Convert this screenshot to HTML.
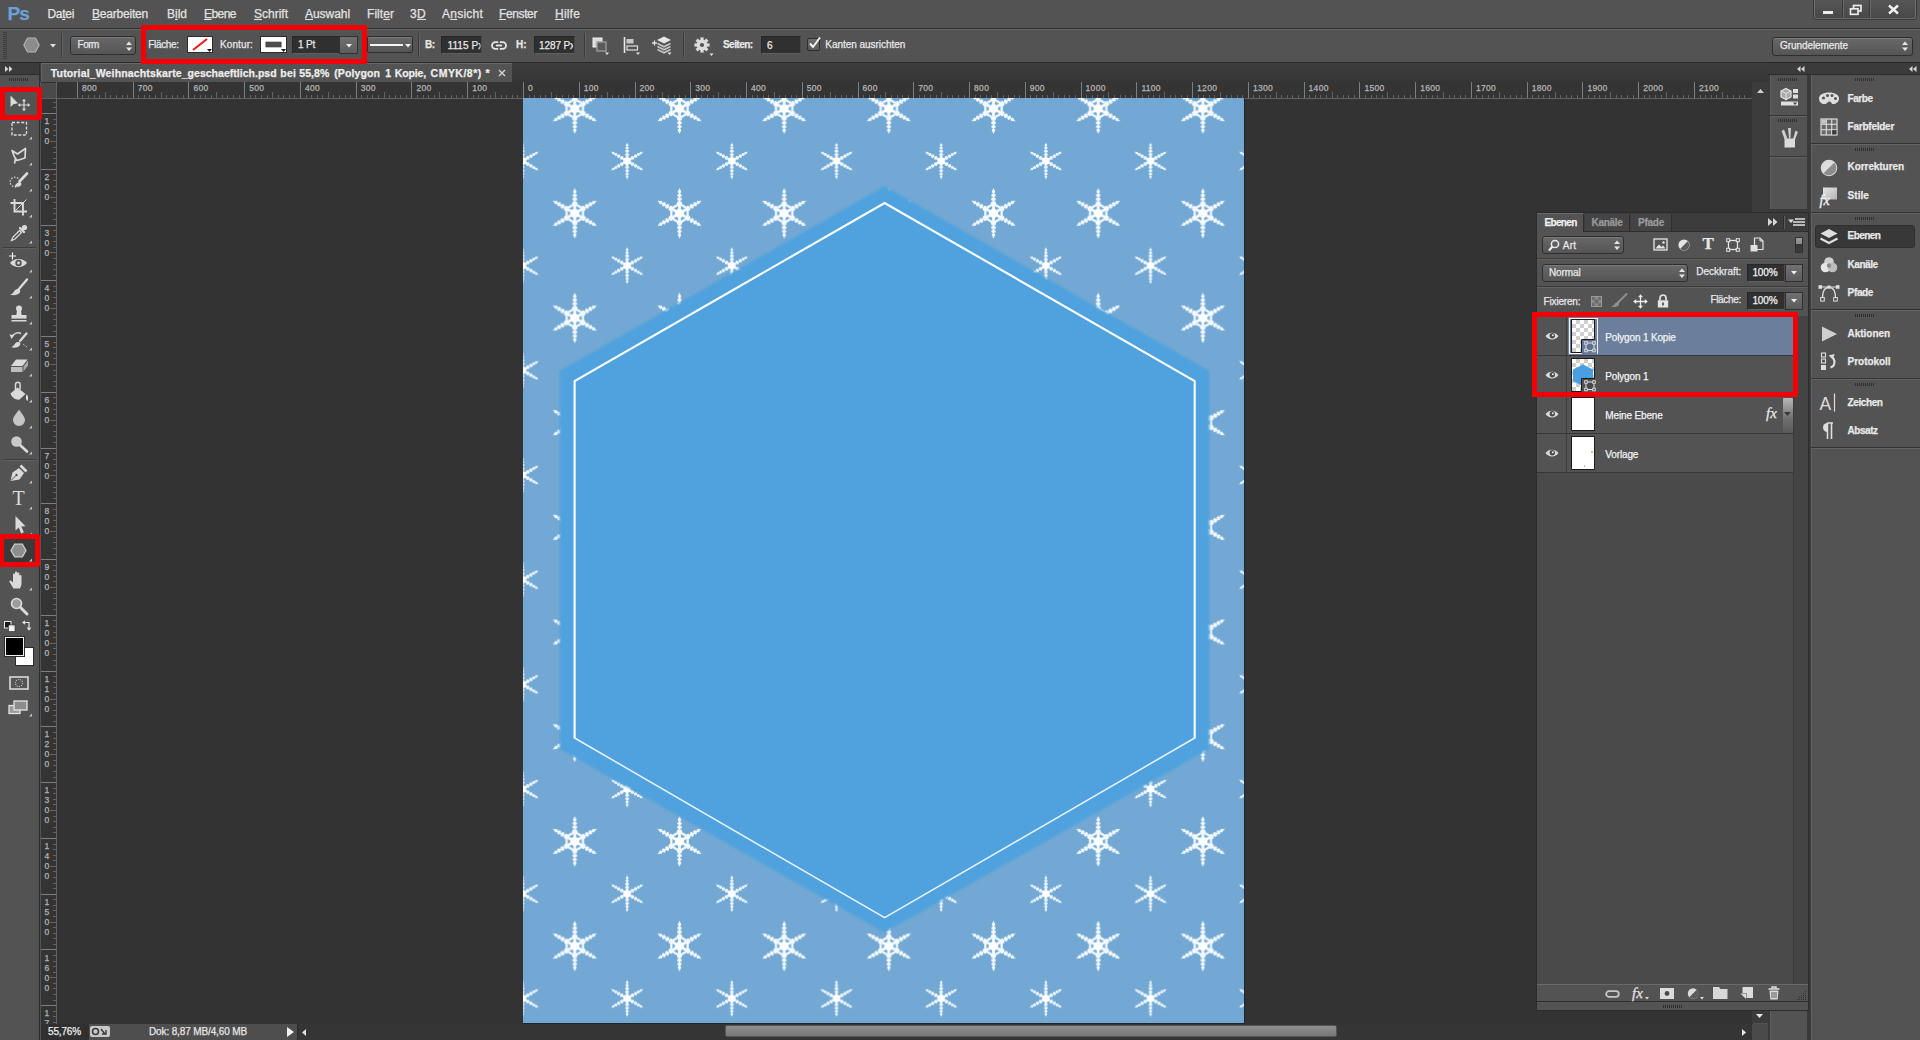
<!DOCTYPE html>
<html>
<head>
<meta charset="utf-8">
<title>Photoshop</title>
<style>
*{box-sizing:border-box;margin:0;padding:0}
html,body{width:1920px;height:1040px;overflow:hidden;background:#535353;font-family:"Liberation Sans",sans-serif;font-size:11px;color:#e6e6e6}
div,span,svg{position:absolute}
.t{white-space:nowrap;display:block;-webkit-text-stroke:0.25px}
svg{overflow:visible}
#menubar{left:0;top:0;width:1920px;height:29px;background:#535353;border-bottom:1px solid #303030}
#optbar{left:0;top:29px;width:1920px;height:34px;background:#535353;border-top:1px solid #676767;border-bottom:1px solid #2a2a2a}
#tabbar{left:40px;top:63px;width:1728px;height:19px;background:linear-gradient(#3d3d3d,#353535)}
#tab{left:1px;top:0;width:471px;height:19px;background:#535353;border-top:1px solid #6a6a6a;border-left:1px solid #646464}
#work{left:41px;top:82px;width:1712px;height:942px;background:#333333}
#hruler{left:41px;top:82px;width:1711px;height:17px;background:#343434;border-bottom:1px solid #646464}
#vruler{overflow:hidden;left:41px;top:99px;width:16px;height:925px;background:#343434;border-right:1px solid #646464}
#rcorner{left:41px;top:82px;width:16px;height:17px;background:#303030;border-right:1px solid #606060;border-bottom:1px solid #606060}
#rcorner:after{content:'';position:absolute;left:0;top:1px;width:15px;height:15px;background:#4a4a4a}
#canvas{left:523px;top:98px;width:721px;height:925px;overflow:hidden;background:#72a8d3}
#cshadow{left:523px;top:98px;width:722px;height:926px;background:#20262c}
#vscroll{left:1752px;top:82px;width:16px;height:941px;background:#3c3c3c}
#status{left:41px;top:1024px;width:1727px;height:16px;background:#353535}
#toolbar{left:0;top:63px;width:40px;height:977px;background:#535353}
.fld{background:#303030;border:1px solid #272727;border-bottom-color:#5f5f5f;border-right-color:#4a4a4a}
.dd{background:linear-gradient(#686868,#555555);border:1px solid #2e2e2e;border-radius:3px;box-shadow:inset 0 1px 0 #7a7a7a}
.btn{background:linear-gradient(#707070,#5c5c5c);border:1px solid #303030}
.vsep{width:1px;background:#3a3a3a;box-shadow:1px 0 0 #626262}
.red{border:5px solid #f20006}
.grip{height:3px;background:repeating-linear-gradient(90deg,#2f2f2f 0,#2f2f2f 1px,transparent 1px,transparent 2px)}

</style>
</head>
<body>
<div id="menubar"><span class="t" style="left:7.5px;top:1.9px;font-size:19px;line-height:23px;color:#6c9fd6;font-weight:bold;letter-spacing:-0.87px;">Ps</span><span class="t" style="left:47.5px;top:5.6px;font-size:12px;line-height:16px;color:#e2e2e2;letter-spacing:-0.30px;text-underline-offset:1px;">Da<u>t</u>ei</span><span class="t" style="left:92.0px;top:5.6px;font-size:12px;line-height:16px;color:#e2e2e2;letter-spacing:-0.20px;text-underline-offset:1px;"><u>B</u>earbeiten</span><span class="t" style="left:167.0px;top:5.6px;font-size:12px;line-height:16px;color:#e2e2e2;text-underline-offset:1px;">B<u>i</u>ld</span><span class="t" style="left:204.0px;top:5.6px;font-size:12px;line-height:16px;color:#e2e2e2;letter-spacing:-0.54px;text-underline-offset:1px;"><u>E</u>bene</span><span class="t" style="left:254.0px;top:5.6px;font-size:12px;line-height:16px;color:#e2e2e2;text-underline-offset:1px;"><u>S</u>chrift</span><span class="t" style="left:305.0px;top:5.6px;font-size:12px;line-height:16px;color:#e2e2e2;letter-spacing:-0.05px;text-underline-offset:1px;"><u>A</u>uswahl</span><span class="t" style="left:367.0px;top:5.6px;font-size:12px;line-height:16px;color:#e2e2e2;letter-spacing:0.06px;text-underline-offset:1px;">Filt<u>e</u>r</span><span class="t" style="left:410.0px;top:5.6px;font-size:12px;line-height:16px;color:#e2e2e2;letter-spacing:0.33px;text-underline-offset:1px;">3<u>D</u></span><span class="t" style="left:442.0px;top:5.6px;font-size:12px;line-height:16px;color:#e2e2e2;letter-spacing:0.24px;text-underline-offset:1px;">A<u>n</u>sicht</span><span class="t" style="left:499.0px;top:5.6px;font-size:12px;line-height:16px;color:#e2e2e2;letter-spacing:-0.38px;text-underline-offset:1px;"><u>F</u>enster</span><span class="t" style="left:555.0px;top:5.6px;font-size:12px;line-height:16px;color:#e2e2e2;letter-spacing:0.20px;text-underline-offset:1px;"><u>H</u>ilfe</span><div style="left:1814px;top:0;width:102px;height:19px;background:linear-gradient(#565656,#484848);border:1px solid #6c6c6c;border-top:none;border-radius:0 0 3px 3px;box-shadow:0 0 0 1px #3a3a3a"></div><div style="left:1842px;top:0;width:1px;height:18px;background:#3a3a3a;box-shadow:1px 0 0 #666"></div><div style="left:1869px;top:0;width:1px;height:18px;background:#3a3a3a;box-shadow:1px 0 0 #666"></div><div style="left:1823px;top:11px;width:10px;height:3px;background:#ececec"></div><svg style="left:1849px;top:4px" width="14" height="12" viewBox="0 0 14 12"><rect x="4.500" y="1.500" width="7.500" height="5.500" fill="none" stroke="#ececec" stroke-width="1.700"/><rect x="1.500" y="4.800" width="7.500" height="5.500" fill="#4e4e4e" stroke="#ececec" stroke-width="1.700"/></svg><svg style="left:1888px;top:5px" width="11" height="9" viewBox="0 0 11 9"><path d="M1 0.500L10 8.500M10 0.500L1 8.500" stroke="#f0f0f0" stroke-width="2.400"/></svg></div><div id="optbar"><div style="left:3px;top:2px;width:4px;height:27px;background:repeating-linear-gradient(#3b3b3b 0,#3b3b3b 1px,transparent 1px,transparent 2px)"></div><svg style="left:23px;top:7px" width="17" height="16" viewBox="0 0 17 16"><polygon points="4.6,1 12.4,1 16.2,8 12.4,15 4.6,15 0.8,8" fill="#8c8c8c" stroke="#b4b4b4" stroke-width="1.2"/></svg><svg style="left:50px;top:14px" width="6" height="4"><polygon points="0,0 6,0 3,3.5" fill="#e0e0e0"/></svg><div class="vsep" style="left:61px;top:3px;height:24px"></div><div class="dd" style="left:70px;top:6px;width:66px;height:19px"></div><span class="t" style="left:77.5px;top:7.5px;font-size:10px;line-height:14px;color:#e8e8e8;letter-spacing:-0.46px;">Form</span><svg style="left:126px;top:11px" width="6" height="10"><polygon points="0,4 6,4 3,0.5" fill="#e6e6e6"/><polygon points="0,6.5 6,6.5 3,10" fill="#e6e6e6"/></svg><span class="t" style="left:148.3px;top:7.5px;font-size:10px;line-height:14px;color:#e8e8e8;letter-spacing:-0.33px;">Fläche:</span><div style="left:187px;top:6px;width:26px;height:17px;background:#fff;border:1px solid #2c2c2c"></div><svg style="left:187px;top:6px" width="26" height="17"><path d="M6 14L20 3" stroke="#e81d1d" stroke-width="2.2"/><polygon points="20,13 25,13 22.5,16" fill="#1a1a1a"/></svg><span class="t" style="left:220.0px;top:7.5px;font-size:10px;line-height:14px;color:#e8e8e8;letter-spacing:0.11px;">Kontur:</span><div style="left:260px;top:6px;width:27px;height:17px;background:#fff;border:1px solid #2c2c2c"></div><svg style="left:260px;top:6px" width="27" height="17"><rect x="6" y="6.200" width="15" height="4.600" fill="#4e4e4e" stroke="#3c3c3c" stroke-width="1"/><polygon points="21,13 26,13 23.5,16" fill="#1a1a1a"/></svg><div class="fld" style="left:292px;top:6px;width:48px;height:18px"></div><span class="t" style="left:298.0px;top:7.5px;font-size:10px;line-height:14px;color:#e8e8e8;letter-spacing:-0.20px;">1 Pt</span><div class="btn" style="left:339px;top:6px;width:19px;height:18px"></div><svg style="left:346px;top:14px" width="6" height="4"><polygon points="0,0 6,0 3,3.5" fill="#f0f0f0"/></svg><div class="dd" style="left:367px;top:6px;width:46px;height:17px;border-radius:2px"></div><div style="left:370px;top:14px;width:33px;height:2px;background:#f4f4f4"></div><svg style="left:405px;top:14px" width="6" height="4"><polygon points="0,0 6,0 3,3.5" fill="#f0f0f0"/></svg><div class="vsep" style="left:418px;top:3px;height:24px"></div><span class="t" style="left:425.0px;top:7.5px;font-size:10px;line-height:14px;color:#e8e8e8;font-weight:bold;letter-spacing:-0.53px;">B:</span><div class="fld" style="left:441px;top:6px;width:41px;height:18px;overflow:hidden"></div><span class="t" style="left:447.5px;top:8.5px;font-size:10px;line-height:14px;color:#e8e8e8;letter-spacing:0.11px;clip-path:inset(0 3px 0 0);">1115 Px</span><svg style="left:491px;top:11px" width="16" height="9" viewBox="0 0 16 9"><rect x="1" y="1.100" width="14" height="6.800" rx="3.400" fill="none" stroke="#e6e6e6" stroke-width="1.800"/><path d="M5 4.500h6" stroke="#e6e6e6" stroke-width="1.800"/><path d="M8 0v2.400M8 6.600v2.400" stroke="#535353" stroke-width="1.600"/></svg><span class="t" style="left:516.0px;top:7.5px;font-size:10px;line-height:14px;color:#e8e8e8;font-weight:bold;letter-spacing:-0.03px;">H:</span><div class="fld" style="left:534px;top:6px;width:41px;height:18px"></div><span class="t" style="left:539.0px;top:8.5px;font-size:10px;line-height:14px;color:#e8e8e8;letter-spacing:-0.10px;clip-path:inset(0 2px 0 0);">1287 Px</span><div class="vsep" style="left:584px;top:3px;height:24px"></div><svg style="left:592px;top:7px" width="18" height="18" viewBox="0 0 18 18"><rect x="1" y="1" width="9" height="9" fill="#d8d8d8" stroke="#efefef" stroke-width="1"/><rect x="5" y="5" width="9" height="9" fill="#5a5a5a" stroke="#9a9a9a" stroke-width="1.4"/><polygon points="13,15.5 17,15.5 15,18" fill="#e0e0e0"/></svg><svg style="left:623px;top:7px" width="18" height="18" viewBox="0 0 18 18"><path d="M1.5 0v16" stroke="#e8e8e8" stroke-width="1.6"/><rect x="3.5" y="2" width="7" height="4.5" fill="#c8c8c8"/><rect x="4" y="9" width="10.5" height="4" fill="none" stroke="#dcdcdc" stroke-width="1.2"/><polygon points="13,15.5 17,15.5 15,18" fill="#e0e0e0"/></svg><svg style="left:651px;top:6px" width="22" height="19" viewBox="0 0 22 19"><path d="M1 7h5M3.5 4.5v5" stroke="#e0e0e0" stroke-width="1.3"/><polygon points="13,0.5 20,4 13,7.5 6,4" fill="#e6e6e6"/><path d="M6.5 7.5L13 10.7 19.5 7.5M6.5 10.5L13 13.7 19.5 10.500M6.500 13.500L13 16.700 19.500 13.500" fill="none" stroke="#c4c4c4" stroke-width="1.7"/><polygon points="16.500,16.500 20.500,16.500 18.500,19" fill="#e0e0e0"/></svg><div class="vsep" style="left:683px;top:3px;height:24px"></div><svg style="left:694px;top:7px" width="20" height="20" viewBox="-8 -8 20 20"><g fill="#dcdcdc"><rect x="-1.6" y="-7.6" width="3.2" height="4" transform="rotate(0)"/><rect x="-1.6" y="-7.6" width="3.2" height="4" transform="rotate(45)"/><rect x="-1.6" y="-7.6" width="3.2" height="4" transform="rotate(90)"/><rect x="-1.6" y="-7.6" width="3.2" height="4" transform="rotate(135)"/><rect x="-1.6" y="-7.6" width="3.2" height="4" transform="rotate(180)"/><rect x="-1.6" y="-7.6" width="3.2" height="4" transform="rotate(225)"/><rect x="-1.6" y="-7.6" width="3.2" height="4" transform="rotate(270)"/><rect x="-1.6" y="-7.6" width="3.2" height="4" transform="rotate(315)"/><circle r="5.4"/></g><circle r="2.1" fill="#535353"/><polygon points="7.5,8.500 11.500,8.500 9.500,11" fill="#e0e0e0"/></svg><span class="t" style="left:723.0px;top:7.5px;font-size:10px;line-height:14px;color:#e8e8e8;font-weight:bold;letter-spacing:-0.55px;">Seiten:</span><div class="fld" style="left:761px;top:6px;width:40px;height:18px"></div><span class="t" style="left:767.0px;top:8.5px;font-size:10px;line-height:14px;color:#e8e8e8;">6</span><div style="left:807px;top:8px;width:13px;height:13px;background:linear-gradient(#6e6e6e,#585858);border:1px solid #2e2e2e;border-radius:2px"></div><svg style="left:808px;top:6px" width="14" height="14" viewBox="0 0 14 14"><path d="M2 7.5L5 11 12 1.500" fill="none" stroke="#f0f0f0" stroke-width="2"/></svg><span class="t" style="left:825.3px;top:7.5px;font-size:10px;line-height:14px;color:#e8e8e8;letter-spacing:-0.04px;">Kanten ausrichten</span><div class="dd" style="left:1772px;top:7px;width:141px;height:19px"></div><span class="t" style="left:1780.0px;top:8.5px;font-size:10px;line-height:14px;color:#e8e8e8;letter-spacing:-0.07px;">Grundelemente</span><svg style="left:1902px;top:11px" width="6" height="10"><polygon points="0,4 6,4 3,0.500" fill="#e6e6e6"/><polygon points="0,6.500 6,6.500 3,10" fill="#e6e6e6"/></svg></div><div id="tabbar"><div id="tab"></div><span class="t" style="left:10.8px;top:2.8px;font-size:10.5px;line-height:14.5px;color:#ededed;font-weight:bold;letter-spacing:0.15px;">Tutorial_Weihnachtskarte_</span><span class="t" style="left:147.6px;top:2.8px;font-size:10.5px;line-height:14.5px;color:#ededed;font-weight:bold;letter-spacing:0.02px;">geschaeftlich.psd</span><span class="t" style="left:240.3px;top:2.8px;font-size:10.5px;line-height:14.5px;color:#ededed;font-weight:bold;letter-spacing:0.24px;">bei</span><span class="t" style="left:259.3px;top:2.8px;font-size:10.5px;line-height:14.5px;color:#ededed;font-weight:bold;letter-spacing:0.05px;">55,8%</span><span class="t" style="left:294.2px;top:2.8px;font-size:10.5px;line-height:14.5px;color:#ededed;font-weight:bold;letter-spacing:0.12px;">(Polygon</span><span class="t" style="left:345.2px;top:2.8px;font-size:10.5px;line-height:14.5px;color:#ededed;font-weight:bold;letter-spacing:-0.04px;">1</span><span class="t" style="left:354.7px;top:2.8px;font-size:10.5px;line-height:14.5px;color:#ededed;font-weight:bold;letter-spacing:-0.10px;">Kopie,</span><span class="t" style="left:390.6px;top:2.8px;font-size:10.5px;line-height:14.5px;color:#ededed;font-weight:bold;letter-spacing:0.48px;">CMYK/8*)</span><span class="t" style="left:445.5px;top:2.8px;font-size:10.5px;line-height:14.5px;color:#ededed;font-weight:bold;letter-spacing:0.21px;">*</span><svg style="left:458px;top:6px" width="8" height="8"><path d="M1 1L7 7M7 1L1 7" stroke="#d6d6d6" stroke-width="1.400"/></svg></div><div id="work"></div><div id="hruler"><svg width="1712" height="17" style="left:0;top:0"><path d="M41.5 12.500v3.500M47.5 12.500v3.500M53.5 12.500v3.500M58.5 12.500v3.500M64.5 10v6M69.5 12.500v3.500M75.5 12.500v3.500M81.5 12.500v3.500M86.5 12.500v3.500M97.5 12.500v3.500M103.5 12.500v3.500M108.5 12.500v3.500M114.5 12.500v3.500M120.5 10v6M125.5 12.500v3.500M131.5 12.500v3.500M136.5 12.500v3.500M142.5 12.500v3.500M153.5 12.500v3.500M159.5 12.500v3.500M164.5 12.500v3.500M170.5 12.500v3.500M175.5 10v6M181.5 12.500v3.500M186.5 12.500v3.500M192.5 12.500v3.500M198.5 12.500v3.500M209.5 12.500v3.500M214.5 12.500v3.500M220.5 12.500v3.500M226.5 12.500v3.500M231.5 10v6M237.5 12.500v3.500M242.5 12.500v3.500M248.5 12.500v3.500M253.5 12.500v3.500M265.5 12.500v3.500M270.5 12.500v3.500M276.5 12.500v3.500M281.5 12.500v3.500M287.5 10v6M292.5 12.500v3.500M298.5 12.500v3.500M304.5 12.500v3.500M309.5 12.500v3.500M320.5 12.500v3.500M326.5 12.500v3.500M331.5 12.500v3.500M337.5 12.500v3.500M343.5 10v6M348.5 12.500v3.500M354.5 12.500v3.500M359.5 12.500v3.500M365.5 12.500v3.500M376.5 12.500v3.500M382.5 12.500v3.500M387.5 12.500v3.500M393.5 12.500v3.500M398.5 10v6M404.5 12.500v3.500M410.5 12.500v3.500M415.5 12.500v3.500M421.5 12.500v3.500M432.5 12.500v3.500M437.5 12.500v3.500M443.5 12.500v3.500M449.5 12.500v3.500M454.5 10v6M460.5 12.500v3.500M465.5 12.500v3.500M471.5 12.500v3.500M476.5 12.500v3.500M488.5 12.500v3.500M493.5 12.500v3.500M499.5 12.500v3.500M504.5 12.500v3.500M510.5 10v6M515.5 12.500v3.500M521.5 12.500v3.500M527.5 12.500v3.500M532.5 12.500v3.500M543.5 12.500v3.500M549.5 12.500v3.500M554.5 12.500v3.500M560.5 12.500v3.500M566.5 10v6M571.5 12.500v3.500M577.5 12.500v3.500M582.5 12.500v3.500M588.5 12.500v3.500M599.5 12.500v3.500M605.5 12.500v3.500M610.5 12.500v3.500M616.5 12.500v3.500M621.5 10v6M627.5 12.500v3.500M633.5 12.500v3.500M638.5 12.500v3.500M644.5 12.500v3.500M655.5 12.500v3.500M660.5 12.500v3.500M666.5 12.500v3.500M672.5 12.500v3.500M677.5 10v6M683.5 12.500v3.500M688.5 12.500v3.500M694.5 12.500v3.500M699.5 12.500v3.500M711.5 12.500v3.500M716.5 12.500v3.500M722.5 12.500v3.500M727.5 12.500v3.500M733.5 10v6M738.5 12.500v3.500M744.5 12.500v3.500M750.5 12.500v3.500M755.5 12.500v3.500M766.5 12.500v3.500M772.5 12.500v3.500M778.5 12.500v3.500M783.5 12.500v3.500M789.5 10v6M794.5 12.500v3.500M800.5 12.500v3.500M805.5 12.500v3.500M811.5 12.500v3.500M822.5 12.500v3.500M828.5 12.500v3.500M833.5 12.500v3.500M839.5 12.500v3.500M844.5 10v6M850.5 12.500v3.500M856.5 12.500v3.500M861.5 12.500v3.500M867.5 12.500v3.500M878.5 12.500v3.500M883.5 12.500v3.500M889.5 12.500v3.500M895.5 12.500v3.500M900.5 10v6M906.5 12.500v3.500M911.5 12.500v3.500M917.5 12.500v3.500M923.5 12.500v3.500M934.5 12.500v3.500M939.5 12.500v3.500M945.5 12.500v3.500M950.5 12.500v3.500M956.5 10v6M962.5 12.500v3.500M967.5 12.500v3.500M973.5 12.500v3.500M978.5 12.500v3.500M989.5 12.500v3.500M995.5 12.500v3.500M1001.5 12.500v3.500M1006.5 12.500v3.500M1012.5 10v6M1017.5 12.500v3.500M1023.5 12.500v3.500M1028.5 12.500v3.500M1034.5 12.500v3.500M1045.5 12.500v3.500M1051.5 12.500v3.500M1056.5 12.500v3.500M1062.5 12.500v3.500M1067.5 10v6M1073.5 12.500v3.500M1079.5 12.500v3.500M1084.5 12.500v3.500M1090.5 12.500v3.500M1101.5 12.500v3.500M1107.5 12.500v3.500M1112.5 12.500v3.500M1118.5 12.500v3.500M1123.5 10v6M1129.5 12.500v3.500M1134.5 12.500v3.500M1140.5 12.500v3.500M1146.5 12.500v3.500M1157.5 12.500v3.500M1162.5 12.500v3.500M1168.5 12.500v3.500M1173.5 12.500v3.500M1179.5 10v6M1185.5 12.500v3.500M1190.5 12.500v3.500M1196.5 12.500v3.500M1201.5 12.500v3.500M1212.5 12.500v3.500M1218.5 12.500v3.500M1224.5 12.500v3.500M1229.5 12.500v3.500M1235.5 10v6M1240.5 12.500v3.500M1246.5 12.500v3.500M1251.5 12.500v3.500M1257.5 12.500v3.500M1268.5 12.500v3.500M1274.5 12.500v3.500M1279.5 12.500v3.500M1285.5 12.500v3.500M1291.5 10v6M1296.5 12.500v3.500M1302.5 12.500v3.500M1307.5 12.500v3.500M1313.5 12.500v3.500M1324.5 12.500v3.500M1330.5 12.500v3.500M1335.5 12.500v3.500M1341.5 12.500v3.500M1346.5 10v6M1352.5 12.500v3.500M1357.5 12.500v3.500M1363.5 12.500v3.500M1369.5 12.500v3.500M1380.5 12.500v3.500M1385.5 12.500v3.500M1391.5 12.500v3.500M1396.5 12.500v3.500M1402.5 10v6M1408.5 12.500v3.500M1413.5 12.500v3.500M1419.5 12.500v3.500M1424.5 12.500v3.500M1435.5 12.500v3.500M1441.5 12.500v3.500M1447.5 12.500v3.500M1452.5 12.500v3.500M1458.5 10v6M1463.5 12.500v3.500M1469.5 12.500v3.500M1475.5 12.500v3.500M1480.5 12.500v3.500M1491.5 12.500v3.500M1497.5 12.500v3.500M1502.5 12.500v3.500M1508.5 12.500v3.500M1514.5 10v6M1519.5 12.500v3.500M1525.5 12.500v3.500M1530.5 12.500v3.500M1536.5 12.500v3.500M1547.5 12.500v3.500M1553.5 12.500v3.500M1558.5 12.500v3.500M1564.5 12.500v3.500M1569.5 10v6M1575.5 12.500v3.500M1580.5 12.500v3.500M1586.5 12.500v3.500M1592.5 12.500v3.500M1603.5 12.500v3.500M1608.5 12.500v3.500M1614.5 12.500v3.500M1620.5 12.500v3.500M1625.5 10v6M1631.5 12.500v3.500M1636.5 12.500v3.500M1642.5 12.500v3.500M1647.5 12.500v3.500M1659.5 12.500v3.500M1664.5 12.500v3.500M1670.5 12.500v3.500M1675.5 12.500v3.500M1681.5 10v6M1686.5 12.500v3.500M1692.5 12.500v3.500M1698.5 12.500v3.500M1703.5 12.500v3.500" stroke="#626262" stroke-width="1" fill="none" shape-rendering="crispEdges"/><path d="M36.5 0v16M92.5 0v16M147.5 0v16M203.5 0v16M259.5 0v16M315.5 0v16M370.5 0v16M426.5 0v16M482.5 0v16M538.5 0v16M594.5 0v16M649.5 0v16M705.5 0v16M761.5 0v16M817.5 0v16M872.5 0v16M928.5 0v16M984.5 0v16M1040.5 0v16M1095.5 0v16M1151.5 0v16M1207.5 0v16M1263.5 0v16M1318.5 0v16M1374.5 0v16M1430.5 0v16M1486.5 0v16M1541.5 0v16M1597.5 0v16M1653.5 0v16" stroke="#7e7e7e" stroke-width="1" fill="none" shape-rendering="crispEdges"/></svg><span class="t" style="left:40.9px;top:0.3px;font-size:8.5px;line-height:12.5px;color:#b4b4b4;letter-spacing:0.3px;">800</span><span class="t" style="left:96.7px;top:0.3px;font-size:8.5px;line-height:12.5px;color:#b4b4b4;letter-spacing:0.3px;">700</span><span class="t" style="left:152.4px;top:0.3px;font-size:8.5px;line-height:12.5px;color:#b4b4b4;letter-spacing:0.3px;">600</span><span class="t" style="left:208.2px;top:0.3px;font-size:8.5px;line-height:12.5px;color:#b4b4b4;letter-spacing:0.3px;">500</span><span class="t" style="left:264.0px;top:0.3px;font-size:8.5px;line-height:12.5px;color:#b4b4b4;letter-spacing:0.3px;">400</span><span class="t" style="left:319.7px;top:0.3px;font-size:8.5px;line-height:12.5px;color:#b4b4b4;letter-spacing:0.3px;">300</span><span class="t" style="left:375.5px;top:0.3px;font-size:8.5px;line-height:12.5px;color:#b4b4b4;letter-spacing:0.3px;">200</span><span class="t" style="left:431.2px;top:0.3px;font-size:8.5px;line-height:12.5px;color:#b4b4b4;letter-spacing:0.3px;">100</span><span class="t" style="left:487.0px;top:0.3px;font-size:8.5px;line-height:12.5px;color:#b4b4b4;letter-spacing:0.3px;">0</span><span class="t" style="left:542.8px;top:0.3px;font-size:8.5px;line-height:12.5px;color:#b4b4b4;letter-spacing:0.3px;">100</span><span class="t" style="left:598.5px;top:0.3px;font-size:8.5px;line-height:12.5px;color:#b4b4b4;letter-spacing:0.3px;">200</span><span class="t" style="left:654.3px;top:0.3px;font-size:8.5px;line-height:12.5px;color:#b4b4b4;letter-spacing:0.3px;">300</span><span class="t" style="left:710.0px;top:0.3px;font-size:8.5px;line-height:12.5px;color:#b4b4b4;letter-spacing:0.3px;">400</span><span class="t" style="left:765.8px;top:0.3px;font-size:8.5px;line-height:12.5px;color:#b4b4b4;letter-spacing:0.3px;">500</span><span class="t" style="left:821.6px;top:0.3px;font-size:8.5px;line-height:12.5px;color:#b4b4b4;letter-spacing:0.3px;">600</span><span class="t" style="left:877.3px;top:0.3px;font-size:8.5px;line-height:12.5px;color:#b4b4b4;letter-spacing:0.3px;">700</span><span class="t" style="left:933.1px;top:0.3px;font-size:8.5px;line-height:12.5px;color:#b4b4b4;letter-spacing:0.3px;">800</span><span class="t" style="left:988.8px;top:0.3px;font-size:8.5px;line-height:12.5px;color:#b4b4b4;letter-spacing:0.3px;">900</span><span class="t" style="left:1044.6px;top:0.3px;font-size:8.5px;line-height:12.5px;color:#b4b4b4;letter-spacing:0.3px;">1000</span><span class="t" style="left:1100.4px;top:0.3px;font-size:8.5px;line-height:12.5px;color:#b4b4b4;letter-spacing:0.3px;">1100</span><span class="t" style="left:1156.1px;top:0.3px;font-size:8.5px;line-height:12.5px;color:#b4b4b4;letter-spacing:0.3px;">1200</span><span class="t" style="left:1211.9px;top:0.3px;font-size:8.5px;line-height:12.5px;color:#b4b4b4;letter-spacing:0.3px;">1300</span><span class="t" style="left:1267.6px;top:0.3px;font-size:8.5px;line-height:12.5px;color:#b4b4b4;letter-spacing:0.3px;">1400</span><span class="t" style="left:1323.4px;top:0.3px;font-size:8.5px;line-height:12.5px;color:#b4b4b4;letter-spacing:0.3px;">1500</span><span class="t" style="left:1379.2px;top:0.3px;font-size:8.5px;line-height:12.5px;color:#b4b4b4;letter-spacing:0.3px;">1600</span><span class="t" style="left:1434.9px;top:0.3px;font-size:8.5px;line-height:12.5px;color:#b4b4b4;letter-spacing:0.3px;">1700</span><span class="t" style="left:1490.7px;top:0.3px;font-size:8.5px;line-height:12.5px;color:#b4b4b4;letter-spacing:0.3px;">1800</span><span class="t" style="left:1546.4px;top:0.3px;font-size:8.5px;line-height:12.5px;color:#b4b4b4;letter-spacing:0.3px;">1900</span><span class="t" style="left:1602.2px;top:0.3px;font-size:8.5px;line-height:12.5px;color:#b4b4b4;letter-spacing:0.3px;">2000</span><span class="t" style="left:1658.0px;top:0.3px;font-size:8.5px;line-height:12.5px;color:#b4b4b4;letter-spacing:0.3px;">2100</span></div><div id="vruler"><svg width="16" height="924" style="left:0;top:0"><path d="M12 3.5h4M12 8.5h4M12 20.5h4M12 25.5h4M12 31.5h4M12 36.5h4M9 42.5h7M12 48.5h4M12 53.5h4M12 59.5h4M12 64.5h4M12 75.5h4M12 81.5h4M12 87.5h4M12 92.5h4M9 98.5h7M12 103.5h4M12 109.5h4M12 114.5h4M12 120.5h4M12 131.5h4M12 137.5h4M12 142.5h4M12 148.5h4M9 153.5h7M12 159.5h4M12 165.5h4M12 170.5h4M12 176.5h4M12 187.5h4M12 192.5h4M12 198.5h4M12 204.5h4M9 209.5h7M12 215.5h4M12 220.5h4M12 226.5h4M12 232.5h4M12 243.5h4M12 248.5h4M12 254.5h4M12 259.5h4M9 265.5h7M12 271.5h4M12 276.5h4M12 282.5h4M12 287.5h4M12 298.5h4M12 304.5h4M12 310.5h4M12 315.5h4M9 321.5h7M12 326.5h4M12 332.5h4M12 337.5h4M12 343.5h4M12 354.5h4M12 360.5h4M12 365.5h4M12 371.5h4M9 376.5h7M12 382.5h4M12 388.5h4M12 393.5h4M12 399.5h4M12 410.5h4M12 416.5h4M12 421.5h4M12 427.5h4M9 432.5h7M12 438.5h4M12 443.5h4M12 449.5h4M12 455.5h4M12 466.5h4M12 471.5h4M12 477.5h4M12 482.5h4M9 488.5h7M12 494.5h4M12 499.5h4M12 505.5h4M12 510.5h4M12 521.5h4M12 527.5h4M12 533.5h4M12 538.5h4M9 544.5h7M12 549.5h4M12 555.5h4M12 561.5h4M12 566.5h4M12 577.5h4M12 583.5h4M12 588.5h4M12 594.5h4M9 600.5h7M12 605.5h4M12 611.5h4M12 616.5h4M12 622.5h4M12 633.5h4M12 639.5h4M12 644.5h4M12 650.5h4M9 655.5h7M12 661.5h4M12 666.5h4M12 672.5h4M12 678.5h4M12 689.5h4M12 694.5h4M12 700.5h4M12 705.5h4M9 711.5h7M12 717.5h4M12 722.5h4M12 728.5h4M12 733.5h4M12 745.5h4M12 750.5h4M12 756.5h4M12 761.5h4M9 767.5h7M12 772.5h4M12 778.5h4M12 784.5h4M12 789.5h4M12 800.5h4M12 806.5h4M12 811.5h4M12 817.5h4M9 823.5h7M12 828.5h4M12 834.5h4M12 839.5h4M12 845.5h4M12 856.5h4M12 862.5h4M12 867.5h4M12 873.5h4M9 878.5h7M12 884.5h4M12 889.5h4M12 895.5h4M12 901.5h4M12 912.5h4M12 917.5h4M12 923.5h4" stroke="#626262" stroke-width="1" fill="none" shape-rendering="crispEdges"/><path d="M0 14.5h16M0 70.5h16M0 126.5h16M0 181.5h16M0 237.5h16M0 293.5h16M0 349.5h16M0 404.5h16M0 460.5h16M0 516.5h16M0 572.5h16M0 627.5h16M0 683.5h16M0 739.5h16M0 795.5h16M0 850.5h16M0 906.5h16" stroke="#7e7e7e" stroke-width="1" fill="none" shape-rendering="crispEdges"/></svg><span class="t" style="left:3.5px;top:16.1px;font-size:8.5px;line-height:12.5px;color:#b4b4b4;">1</span><span class="t" style="left:3.5px;top:26.1px;font-size:8.5px;line-height:12.5px;color:#b4b4b4;">0</span><span class="t" style="left:3.5px;top:36.1px;font-size:8.5px;line-height:12.5px;color:#b4b4b4;">0</span><span class="t" style="left:3.5px;top:71.8px;font-size:8.5px;line-height:12.5px;color:#b4b4b4;">2</span><span class="t" style="left:3.5px;top:81.8px;font-size:8.5px;line-height:12.5px;color:#b4b4b4;">0</span><span class="t" style="left:3.5px;top:91.8px;font-size:8.5px;line-height:12.5px;color:#b4b4b4;">0</span><span class="t" style="left:3.5px;top:127.6px;font-size:8.5px;line-height:12.5px;color:#b4b4b4;">3</span><span class="t" style="left:3.5px;top:137.6px;font-size:8.5px;line-height:12.5px;color:#b4b4b4;">0</span><span class="t" style="left:3.5px;top:147.6px;font-size:8.5px;line-height:12.5px;color:#b4b4b4;">0</span><span class="t" style="left:3.5px;top:183.3px;font-size:8.5px;line-height:12.5px;color:#b4b4b4;">4</span><span class="t" style="left:3.5px;top:193.3px;font-size:8.5px;line-height:12.5px;color:#b4b4b4;">0</span><span class="t" style="left:3.5px;top:203.3px;font-size:8.5px;line-height:12.5px;color:#b4b4b4;">0</span><span class="t" style="left:3.5px;top:239.1px;font-size:8.5px;line-height:12.5px;color:#b4b4b4;">5</span><span class="t" style="left:3.5px;top:249.1px;font-size:8.5px;line-height:12.5px;color:#b4b4b4;">0</span><span class="t" style="left:3.5px;top:259.1px;font-size:8.5px;line-height:12.5px;color:#b4b4b4;">0</span><span class="t" style="left:3.5px;top:294.9px;font-size:8.5px;line-height:12.5px;color:#b4b4b4;">6</span><span class="t" style="left:3.5px;top:304.9px;font-size:8.5px;line-height:12.5px;color:#b4b4b4;">0</span><span class="t" style="left:3.5px;top:314.9px;font-size:8.5px;line-height:12.5px;color:#b4b4b4;">0</span><span class="t" style="left:3.5px;top:350.6px;font-size:8.5px;line-height:12.5px;color:#b4b4b4;">7</span><span class="t" style="left:3.5px;top:360.6px;font-size:8.5px;line-height:12.5px;color:#b4b4b4;">0</span><span class="t" style="left:3.5px;top:370.6px;font-size:8.5px;line-height:12.5px;color:#b4b4b4;">0</span><span class="t" style="left:3.5px;top:406.4px;font-size:8.5px;line-height:12.5px;color:#b4b4b4;">8</span><span class="t" style="left:3.5px;top:416.4px;font-size:8.5px;line-height:12.5px;color:#b4b4b4;">0</span><span class="t" style="left:3.5px;top:426.4px;font-size:8.5px;line-height:12.5px;color:#b4b4b4;">0</span><span class="t" style="left:3.5px;top:462.1px;font-size:8.5px;line-height:12.5px;color:#b4b4b4;">9</span><span class="t" style="left:3.5px;top:472.1px;font-size:8.5px;line-height:12.5px;color:#b4b4b4;">0</span><span class="t" style="left:3.5px;top:482.1px;font-size:8.5px;line-height:12.5px;color:#b4b4b4;">0</span><span class="t" style="left:3.5px;top:517.9px;font-size:8.5px;line-height:12.5px;color:#b4b4b4;">1</span><span class="t" style="left:3.5px;top:527.9px;font-size:8.5px;line-height:12.5px;color:#b4b4b4;">0</span><span class="t" style="left:3.5px;top:537.9px;font-size:8.5px;line-height:12.5px;color:#b4b4b4;">0</span><span class="t" style="left:3.5px;top:547.9px;font-size:8.5px;line-height:12.5px;color:#b4b4b4;">0</span><span class="t" style="left:3.5px;top:573.7px;font-size:8.5px;line-height:12.5px;color:#b4b4b4;">1</span><span class="t" style="left:3.5px;top:583.7px;font-size:8.5px;line-height:12.5px;color:#b4b4b4;">1</span><span class="t" style="left:3.5px;top:593.7px;font-size:8.5px;line-height:12.5px;color:#b4b4b4;">0</span><span class="t" style="left:3.5px;top:603.7px;font-size:8.5px;line-height:12.5px;color:#b4b4b4;">0</span><span class="t" style="left:3.5px;top:629.4px;font-size:8.5px;line-height:12.5px;color:#b4b4b4;">1</span><span class="t" style="left:3.5px;top:639.4px;font-size:8.5px;line-height:12.5px;color:#b4b4b4;">2</span><span class="t" style="left:3.5px;top:649.4px;font-size:8.5px;line-height:12.5px;color:#b4b4b4;">0</span><span class="t" style="left:3.5px;top:659.4px;font-size:8.5px;line-height:12.5px;color:#b4b4b4;">0</span><span class="t" style="left:3.5px;top:685.2px;font-size:8.5px;line-height:12.5px;color:#b4b4b4;">1</span><span class="t" style="left:3.5px;top:695.2px;font-size:8.5px;line-height:12.5px;color:#b4b4b4;">3</span><span class="t" style="left:3.5px;top:705.2px;font-size:8.5px;line-height:12.5px;color:#b4b4b4;">0</span><span class="t" style="left:3.5px;top:715.2px;font-size:8.5px;line-height:12.5px;color:#b4b4b4;">0</span><span class="t" style="left:3.5px;top:740.9px;font-size:8.5px;line-height:12.5px;color:#b4b4b4;">1</span><span class="t" style="left:3.5px;top:750.9px;font-size:8.5px;line-height:12.5px;color:#b4b4b4;">4</span><span class="t" style="left:3.5px;top:760.9px;font-size:8.5px;line-height:12.5px;color:#b4b4b4;">0</span><span class="t" style="left:3.5px;top:770.9px;font-size:8.5px;line-height:12.5px;color:#b4b4b4;">0</span><span class="t" style="left:3.5px;top:796.7px;font-size:8.5px;line-height:12.5px;color:#b4b4b4;">1</span><span class="t" style="left:3.5px;top:806.7px;font-size:8.5px;line-height:12.5px;color:#b4b4b4;">5</span><span class="t" style="left:3.5px;top:816.7px;font-size:8.5px;line-height:12.5px;color:#b4b4b4;">0</span><span class="t" style="left:3.5px;top:826.7px;font-size:8.5px;line-height:12.5px;color:#b4b4b4;">0</span><span class="t" style="left:3.5px;top:852.5px;font-size:8.5px;line-height:12.5px;color:#b4b4b4;">1</span><span class="t" style="left:3.5px;top:862.5px;font-size:8.5px;line-height:12.5px;color:#b4b4b4;">6</span><span class="t" style="left:3.5px;top:872.5px;font-size:8.5px;line-height:12.5px;color:#b4b4b4;">0</span><span class="t" style="left:3.5px;top:882.5px;font-size:8.5px;line-height:12.5px;color:#b4b4b4;">0</span><span class="t" style="left:3.5px;top:908.2px;font-size:8.5px;line-height:12.5px;color:#b4b4b4;">1</span><span class="t" style="left:3.5px;top:918.2px;font-size:8.5px;line-height:12.5px;color:#b4b4b4;">7</span><span class="t" style="left:3.5px;top:928.2px;font-size:8.5px;line-height:12.5px;color:#b4b4b4;">0</span><span class="t" style="left:3.5px;top:938.2px;font-size:8.5px;line-height:12.5px;color:#b4b4b4;">0</span></div><div id="rcorner"></div><div id="vscroll"></div><svg style="left:1757px;top:89px" width="7" height="4"><polygon points="0,4 7,4 3.500,0" fill="#d0d0d0"/></svg><svg style="left:1756px;top:1014px" width="7" height="4"><polygon points="0,0 7,0 3.500,4" fill="#e8e8e8"/></svg><div id="status"><div style="left:0;top:0;width:256px;height:16px;background:#4e4e4e"></div><div style="left:0;top:0;width:48px;height:16px;background:#303030"></div><span class="t" style="left:7.0px;top:0.5px;font-size:10px;line-height:14px;color:#ececec;letter-spacing:-0.15px;">55,76%</span><div style="left:49px;top:2px;width:20px;height:11px;background:#c9c9c9;border-radius:2px"></div><svg style="left:49px;top:2px" width="20" height="11" viewBox="0 0 20 11"><circle cx="5.500" cy="5.500" r="3" fill="none" stroke="#3a3a3a" stroke-width="1.600"/><path d="M11 3l4 5M12 8h4V4" fill="none" stroke="#3a3a3a" stroke-width="1.400"/></svg><span class="t" style="left:108.0px;top:0.8px;font-size:10px;line-height:14px;color:#e6e6e6;letter-spacing:-0.13px;">Dok: 8,87 MB/4,60 MB</span><svg style="left:246px;top:3px" width="8" height="10"><polygon points="0,0 0,10 7,5" fill="#f0f0f0"/></svg><div style="left:256px;top:0;width:1px;height:16px;background:#2a2a2a"></div><svg style="left:261px;top:5px" width="4" height="7"><polygon points="4,0 4,7 0,3.500" fill="#e0e0e0"/></svg><div style="left:684px;top:1px;width:612px;height:12px;background:linear-gradient(#8e8e8e,#787878);border-radius:2px;border:1px solid #555"></div><svg style="left:1701px;top:5px" width="4" height="7"><polygon points="0,0 0,7 4,3.500" fill="#e8e8e8"/></svg><div style="left:1711px;top:0;width:16px;height:16px;background:#4a4a4a"></div></div><div id="cshadow"></div><div id="canvas"><svg width="721" height="925" viewBox="0 0 721 925" style="position:absolute;left:0;top:0">
<defs>
<filter id="hb" x="-3%" y="-3%" width="106%" height="106%"><feGaussianBlur stdDeviation="1.1"/></filter>
<filter id="bl" x="-5%" y="-5%" width="110%" height="110%"><feGaussianBlur stdDeviation="0.55"/></filter>
<g id="big" fill="#f3f9fe"><g transform="rotate(30)"><rect x="0" y="-0.65" width="23.00" height="1.30"/><rect x="0" y="-1.40" width="10.00" height="2.80"/><ellipse cx="10.20" cy="0" rx="2.00" ry="2.60"/><ellipse cx="14.20" cy="0" rx="1.70" ry="2.50"/><ellipse cx="18.00" cy="0" rx="1.60" ry="2.20"/><ellipse cx="21.50" cy="0" rx="1.40" ry="1.80"/><polygon points="22.5,-1.2 25.5,0 22.5,1.2"/></g><g transform="rotate(90)"><rect x="0" y="-0.65" width="23.00" height="1.30"/><rect x="0" y="-1.40" width="10.00" height="2.80"/><ellipse cx="10.20" cy="0" rx="2.00" ry="2.60"/><ellipse cx="14.20" cy="0" rx="1.70" ry="2.50"/><ellipse cx="18.00" cy="0" rx="1.60" ry="2.20"/><ellipse cx="21.50" cy="0" rx="1.40" ry="1.80"/><polygon points="22.5,-1.2 25.5,0 22.5,1.2"/></g><g transform="rotate(150)"><rect x="0" y="-0.65" width="23.00" height="1.30"/><rect x="0" y="-1.40" width="10.00" height="2.80"/><ellipse cx="10.20" cy="0" rx="2.00" ry="2.60"/><ellipse cx="14.20" cy="0" rx="1.70" ry="2.50"/><ellipse cx="18.00" cy="0" rx="1.60" ry="2.20"/><ellipse cx="21.50" cy="0" rx="1.40" ry="1.80"/><polygon points="22.5,-1.2 25.5,0 22.5,1.2"/></g><g transform="rotate(210)"><rect x="0" y="-0.65" width="23.00" height="1.30"/><rect x="0" y="-1.40" width="10.00" height="2.80"/><ellipse cx="10.20" cy="0" rx="2.00" ry="2.60"/><ellipse cx="14.20" cy="0" rx="1.70" ry="2.50"/><ellipse cx="18.00" cy="0" rx="1.60" ry="2.20"/><ellipse cx="21.50" cy="0" rx="1.40" ry="1.80"/><polygon points="22.5,-1.2 25.5,0 22.5,1.2"/></g><g transform="rotate(270)"><rect x="0" y="-0.65" width="23.00" height="1.30"/><rect x="0" y="-1.40" width="10.00" height="2.80"/><ellipse cx="10.20" cy="0" rx="2.00" ry="2.60"/><ellipse cx="14.20" cy="0" rx="1.70" ry="2.50"/><ellipse cx="18.00" cy="0" rx="1.60" ry="2.20"/><ellipse cx="21.50" cy="0" rx="1.40" ry="1.80"/><polygon points="22.5,-1.2 25.5,0 22.5,1.2"/></g><g transform="rotate(330)"><rect x="0" y="-0.65" width="23.00" height="1.30"/><rect x="0" y="-1.40" width="10.00" height="2.80"/><ellipse cx="10.20" cy="0" rx="2.00" ry="2.60"/><ellipse cx="14.20" cy="0" rx="1.70" ry="2.50"/><ellipse cx="18.00" cy="0" rx="1.60" ry="2.20"/><ellipse cx="21.50" cy="0" rx="1.40" ry="1.80"/><polygon points="22.5,-1.2 25.5,0 22.5,1.2"/></g><polygon points="8.14,4.70 0.00,9.40 -8.14,4.70 -8.14,-4.70 -0.00,-9.40 8.14,-4.70" fill="none" stroke="#f3f9fe" stroke-width="2.3" stroke-linejoin="round"/><circle r="4.6" fill="#fdfeff"/></g>
<g id="sm" fill="#eff7fd"><g transform="rotate(30)"><rect x="0" y="-0.55" width="16.50" height="1.10"/><rect x="0" y="-1.20" width="5.00" height="2.40"/><ellipse cx="6.30" cy="0" rx="1.40" ry="2.00"/><ellipse cx="9.80" cy="0" rx="1.30" ry="1.90"/><ellipse cx="13.00" cy="0" rx="1.20" ry="1.60"/><ellipse cx="15.80" cy="0" rx="1.10" ry="1.30"/><polygon points="16,-0.9 18.8,0 16,0.9"/></g><g transform="rotate(90)"><rect x="0" y="-0.55" width="16.50" height="1.10"/><rect x="0" y="-1.20" width="5.00" height="2.40"/><ellipse cx="6.30" cy="0" rx="1.40" ry="2.00"/><ellipse cx="9.80" cy="0" rx="1.30" ry="1.90"/><ellipse cx="13.00" cy="0" rx="1.20" ry="1.60"/><ellipse cx="15.80" cy="0" rx="1.10" ry="1.30"/><polygon points="16,-0.9 18.8,0 16,0.9"/></g><g transform="rotate(150)"><rect x="0" y="-0.55" width="16.50" height="1.10"/><rect x="0" y="-1.20" width="5.00" height="2.40"/><ellipse cx="6.30" cy="0" rx="1.40" ry="2.00"/><ellipse cx="9.80" cy="0" rx="1.30" ry="1.90"/><ellipse cx="13.00" cy="0" rx="1.20" ry="1.60"/><ellipse cx="15.80" cy="0" rx="1.10" ry="1.30"/><polygon points="16,-0.9 18.8,0 16,0.9"/></g><g transform="rotate(210)"><rect x="0" y="-0.55" width="16.50" height="1.10"/><rect x="0" y="-1.20" width="5.00" height="2.40"/><ellipse cx="6.30" cy="0" rx="1.40" ry="2.00"/><ellipse cx="9.80" cy="0" rx="1.30" ry="1.90"/><ellipse cx="13.00" cy="0" rx="1.20" ry="1.60"/><ellipse cx="15.80" cy="0" rx="1.10" ry="1.30"/><polygon points="16,-0.9 18.8,0 16,0.9"/></g><g transform="rotate(270)"><rect x="0" y="-0.55" width="16.50" height="1.10"/><rect x="0" y="-1.20" width="5.00" height="2.40"/><ellipse cx="6.30" cy="0" rx="1.40" ry="2.00"/><ellipse cx="9.80" cy="0" rx="1.30" ry="1.90"/><ellipse cx="13.00" cy="0" rx="1.20" ry="1.60"/><ellipse cx="15.80" cy="0" rx="1.10" ry="1.30"/><polygon points="16,-0.9 18.8,0 16,0.9"/></g><g transform="rotate(330)"><rect x="0" y="-0.55" width="16.50" height="1.10"/><rect x="0" y="-1.20" width="5.00" height="2.40"/><ellipse cx="6.30" cy="0" rx="1.40" ry="2.00"/><ellipse cx="9.80" cy="0" rx="1.30" ry="1.90"/><ellipse cx="13.00" cy="0" rx="1.20" ry="1.60"/><ellipse cx="15.80" cy="0" rx="1.10" ry="1.30"/><polygon points="16,-0.9 18.8,0 16,0.9"/></g><circle r="3.8" fill="#fdfeff"/></g>
<pattern id="sn" x="-0.54" y="-41.700" width="104.68" height="104.68" patternUnits="userSpaceOnUse">
<use href="#big" x="52.34" y="52.34"/>
<use href="#sm" x="0" y="0"/><use href="#sm" x="104.68" y="0"/><use href="#sm" x="0" y="104.68"/><use href="#sm" x="104.68" y="104.68"/>
</pattern>
</defs>
<rect width="721" height="925" fill="#72a8d3"/>
<rect width="721" height="925" fill="url(#sn)" filter="url(#bl)"/>
<polygon points="361.6,88.2 686.4,273 686.4,650.8 361.6,834.5 36.6,650.8 36.6,273" fill="#4fa2dd" filter="url(#hb)"/>
<polygon points="361.6,100 676,280 676,643 361.6,824 47,643 47,280" fill="#4fa2dd"/>
<polyline points="51.6,640.5 51.6,283 361.6,105 671.7,283 671.7,640.5" fill="none" stroke="#ffffff" stroke-width="2.1" stroke-linejoin="miter"/><polyline points="671.7,640 361.6,819.7 51.6,640" fill="none" stroke="#eaf2fa" stroke-width="1.5" stroke-linejoin="miter"/>
</svg></div>
<div id="toolbar"><div style="left:0;top:0;width:40px;height:12px;background:#3b3b3b;border-bottom:1px solid #2c2c2c"></div><svg style="left:5px;top:3px" width="8" height="6"><polygon points="0,0 0,6 3.5,3" fill="#d8d8d8"/><polygon points="4,0 4,6 7.5,3" fill="#d8d8d8"/></svg><div style="left:39px;top:0;width:1px;height:977px;background:#2e2e2e"></div><div class="grip" style="left:9px;top:15px;width:20px"></div><div style="left:3px;top:475px;width:33px;height:25px;background:#3a3a3a;border-radius:2px"></div><svg style="left:7.0px;top:29.0px" width="24" height="22" viewBox="-12.0 -11.0 24 22"><polygon points="-8.5,-7.5 -8.5,4 -5.6,1.2 -1,0.2" fill="#dadada"/><path d="M5 -3v10M0 2h10" stroke="#dadada" stroke-width="1.2"/><path d="M5 -4.2l-2 2.4h4zM5 8.2l-2 -2.4h4zM-1.200 2l2.400 -2v4zM11.200 2l-2.400 -2v4z" fill="#dadada"/></svg><svg style="left:7.0px;top:55.0px" width="24" height="22" viewBox="-12.0 -11.0 24 22"><rect x="-7" y="-6.500" width="14.500" height="12.500" fill="none" stroke="#dadada" stroke-width="1.300" stroke-dasharray="3 1.600"/><polygon points="13,7.5 13,10.5 10,10.5" fill="#c4c4c4"/></svg><svg style="left:7.0px;top:81.0px" width="24" height="22" viewBox="-12.0 -11.0 24 22"><path d="M-7 -4.500L-1.500 -1 6.500 -6.500 6 3 -2 5.500 -4.500 2zM-3.500 3.500l-1 5" fill="none" stroke="#dadada" stroke-width="1.700" stroke-linejoin="round"/><polygon points="13,7.5 13,10.5 10,10.5" fill="#c4c4c4"/></svg><svg style="left:7.0px;top:107.0px" width="24" height="22" viewBox="-12.0 -11.0 24 22"><circle cx="-4" cy="1" r="4.800" fill="none" stroke="#dadada" stroke-width="1.200" stroke-dasharray="1.500 1.500"/><path d="M8 -7.500L0.500 0.500" stroke="#dadada" stroke-width="2.600" stroke-linecap="round"/><path d="M-4.500 5.500c2 -4 5 -5 6.500 -3.500s-1 5 -6.500 3.500z" fill="#dadada"/><polygon points="13,7.5 13,10.5 10,10.5" fill="#c4c4c4"/></svg><svg style="left:7.0px;top:133.0px" width="24" height="22" viewBox="-12.0 -11.0 24 22"><path d="M-4.500 -8v12.500h12.500M-8.500 -4h12.500v12.500" fill="none" stroke="#dadada" stroke-width="1.900"/><path d="M-3.500 3.500L7.500 -7.500" stroke="#dadada" stroke-width="1"/><polygon points="13,7.5 13,10.5 10,10.5" fill="#c4c4c4"/></svg><svg style="left:7.0px;top:159.0px" width="24" height="22" viewBox="-12.0 -11.0 24 22"><path d="M-7.500 7.500l1.500 -3.500 6.500 -6.500 2 2 -6.500 6.500z" fill="none" stroke="#dadada" stroke-width="1.300"/><path d="M1 -5l4 4" stroke="#dadada" stroke-width="2.400" stroke-linecap="round"/><circle cx="5.500" cy="-5.500" r="2.600" fill="#dadada"/><polygon points="13,7.5 13,10.5 10,10.5" fill="#c4c4c4"/></svg><div style="left:3px;top:184px;width:33px;height:1px;background:#3c3c3c;box-shadow:0 1px 0 #606060"></div><svg style="left:7.0px;top:188.0px" width="24" height="22" viewBox="-12.0 -11.0 24 22"><path d="M-9 1c4 -5.500 13 -5.500 17 0c-4 5.500 -13 5.500 -17 0z" fill="#dadada"/><circle cx="-0.500" cy="1" r="3.200" fill="#555"/><circle cx="-0.500" cy="1" r="1.400" fill="#dadada"/><path d="M-6.500 -9.500v7M-10 -6h7" stroke="#f2f2f2" stroke-width="1.200"/><polygon points="13,7.5 13,10.5 10,10.5" fill="#c4c4c4"/></svg><svg style="left:7.0px;top:214.0px" width="24" height="22" viewBox="-12.0 -11.0 24 22"><path d="M8 -8.500L-0.500 1.500" stroke="#dadada" stroke-width="2.400" stroke-linecap="round"/><path d="M-9 6.500c3.500 0 4 -5 7 -5.500s4 2 2.500 4-6 3 -9.500 1.500z" fill="#dadada"/><polygon points="13,7.5 13,10.5 10,10.5" fill="#c4c4c4"/></svg><svg style="left:7.0px;top:240.0px" width="24" height="22" viewBox="-12.0 -11.0 24 22"><circle cx="0" cy="-5.500" r="3" fill="#dadada"/><path d="M-1.800 -4h3.600l1 5.500h-5.600z" fill="#dadada"/><rect x="-7.500" y="1" width="15" height="3.600" fill="#dadada"/><rect x="-7.500" y="6" width="15" height="1.500" fill="#dadada"/><polygon points="13,7.5 13,10.5 10,10.5" fill="#c4c4c4"/></svg><svg style="left:7.0px;top:266.0px" width="24" height="22" viewBox="-12.0 -11.0 24 22"><path d="M7.500 -6.500L1 1" stroke="#dadada" stroke-width="2.300" stroke-linecap="round"/><path d="M-8 7c3 0 3.500 -4.500 6.500 -5s3.500 2 2 3.800-5.500 2.700 -8.500 1.200z" fill="#dadada"/><path d="M-7 -3.500c2 -3.500 6 -4.500 9 -3" fill="none" stroke="#dadada" stroke-width="1.500"/><polygon points="-9.500,-5.500 -4.500,-5 -7.500,-1" fill="#dadada"/><path d="M4 4l4 3" stroke="#dadada" stroke-width="1" stroke-dasharray="1 1"/><polygon points="13,7.5 13,10.5 10,10.5" fill="#c4c4c4"/></svg><svg style="left:7.0px;top:292.0px" width="24" height="22" viewBox="-12.0 -11.0 24 22"><polygon points="-3,-6.500 8.500,-6.500 3.500,0 -8,0" fill="#dadada"/><polygon points="-8,1 3.500,1 3.500,6 -8,6" fill="#bdbdbd"/><polygon points="4.500,0.500 9,-5.500 9,-0.500 4.500,5.500" fill="#a8a8a8"/><polygon points="13,7.5 13,10.5 10,10.5" fill="#c4c4c4"/></svg><svg style="left:7.0px;top:318.0px" width="24" height="22" viewBox="-12.0 -11.0 24 22"><path d="M-8.500 1.500l7 -6 8 6.500 -6 5.500c-3 1 -8 -2 -9 -6z" fill="#dadada"/><path d="M-3.500 -2v-5.500a2.300 2.300 0 0 1 4.600 0v5" fill="none" stroke="#dadada" stroke-width="1.500"/><path d="M7.500 2.500c1.500 1 2 4 1 6.500c-1.500 -1 -2 -4 -1 -6.500z" fill="#f0f0f0"/><polygon points="13,7.5 13,10.5 10,10.5" fill="#c4c4c4"/></svg><svg style="left:7.0px;top:344.0px" width="24" height="22" viewBox="-12.0 -11.0 24 22"><path d="M0 -8.500c2.500 4 6 7 6 10.500a6 6 0 0 1 -12 0c0 -3.500 3.500 -6.500 6 -10.500z" fill="#c6c6c6"/><polygon points="13,7.5 13,10.5 10,10.5" fill="#c4c4c4"/></svg><svg style="left:7.0px;top:370.0px" width="24" height="22" viewBox="-12.0 -11.0 24 22"><circle cx="-2.500" cy="-2.500" r="5.300" fill="#c9c9c9"/><path d="M1.500 1.500l6.500 6" stroke="#dadada" stroke-width="2.600" stroke-linecap="round"/><polygon points="13,7.5 13,10.5 10,10.5" fill="#c4c4c4"/></svg><div style="left:3px;top:396px;width:33px;height:1px;background:#3c3c3c;box-shadow:0 1px 0 #606060"></div><svg style="left:7.0px;top:399.0px" width="24" height="22" viewBox="-12.0 -11.0 24 22"><path d="M-8.500 8l2 -8.500 6.500 -4.500 5 5 -4.500 6.500z" fill="#dadada"/><path d="M1.500 -7.500l6 6" stroke="#dadada" stroke-width="2.600"/><path d="M-8 7.500l5 -5" stroke="#555" stroke-width="1"/><circle cx="-2.500" cy="2" r="1.200" fill="#555"/><polygon points="13,7.5 13,10.5 10,10.5" fill="#c4c4c4"/></svg><span class="t" style="left:12.500px;top:424px;font-family:'Liberation Serif',serif;font-size:20px;line-height:22px;color:#dcdcdc;-webkit-text-stroke:0">T</span><svg style="left:7.0px;top:425.0px" width="24" height="22" viewBox="-12.0 -11.0 24 22"><polygon points="13,7.5 13,10.5 10,10.5" fill="#c4c4c4"/></svg><svg style="left:7.0px;top:451.0px" width="24" height="22" viewBox="-12.0 -11.0 24 22"><polygon points="-3.500,-9 -3.500,5.500 -0.300,2.600 2.200,8.500 4.800,7.300 2.300,1.600 6.500,1.300" fill="#dadada"/><polygon points="13,7.5 13,10.5 10,10.5" fill="#c4c4c4"/></svg><svg style="left:7.0px;top:477.0px" width="24" height="22" viewBox="-12.0 -11.0 24 22"><polygon points="-4.300,-6.800 3.300,-6.800 7,-0.500 3.300,5.800 -4.300,5.800 -8,-0.500" fill="#8e8e8e" stroke="#cdcdcd" stroke-width="1.300"/><polygon points="13,7.5 13,10.5 10,10.5" fill="#c4c4c4"/></svg><svg style="left:7.0px;top:506.0px" width="24" height="22" viewBox="-12.0 -11.0 24 22"><path d="M-5.500 8.500l-4 -6.500c-0.500 -1.500 1 -2 2 -1l1.500 1.500v-8c0 -1.500 2 -1.500 2 0v4.500v-6.500c0 -1.500 2.200 -1.500 2.200 0v6.500v-5.500c0 -1.500 2.200 -1.500 2.200 0v6v-3.500c0 -1.500 2.100 -1.500 2.100 0v7.500c0 2 -1 3.500 -1.500 5z" fill="#dadada"/><polygon points="13,7.5 13,10.5 10,10.5" fill="#c4c4c4"/></svg><svg style="left:7.0px;top:532.0px" width="24" height="22" viewBox="-12.0 -11.0 24 22"><circle cx="-2.500" cy="-2.500" r="5" fill="#9c9c9c" stroke="#dadada" stroke-width="1.600"/><path d="M1.500 1.500l6.500 6.500" stroke="#dadada" stroke-width="3" stroke-linecap="round"/></svg><svg style="left:4px;top:558px" width="12" height="11"><rect x="0.500" y="0.500" width="6.500" height="6.500" fill="#1a1a1a" stroke="#e8e8e8"/><rect x="4.500" y="4" width="6.500" height="6.500" fill="#f2f2f2" stroke="#2a2a2a" stroke-width="0.600"/></svg><svg style="left:22px;top:558px" width="11" height="11" viewBox="0 0 11 11"><path d="M2.500 1.500h4.500v5" fill="none" stroke="#e0e0e0" stroke-width="1.200"/><polygon points="0,1.500 3,-0.800 3,3.800" fill="#e0e0e0"/><polygon points="7,9.800 4.600,6.500 9.400,6.500" fill="#e0e0e0"/></svg><div style="left:14.500px;top:584px;width:19px;height:19px;background:#fff;border:1px solid #2b2b2b"></div><div style="left:4.500px;top:574px;width:19px;height:18.500px;background:#000;border:1.500px solid #f0f0f0;outline:1px solid #2b2b2b"></div><svg style="left:9px;top:613px" width="20" height="14" viewBox="0 0 20 14"><rect x="1" y="1" width="18" height="12" fill="#555" stroke="#e2e2e2" stroke-width="1.500"/><circle cx="10" cy="7" r="3.600" fill="none" stroke="#e0e0e0" stroke-width="1" stroke-dasharray="1.200 1"/></svg><svg style="left:8px;top:637px" width="26" height="18" viewBox="0 0 26 18"><rect x="1" y="5.500" width="11" height="8" fill="#9a9a9a" stroke="#e4e4e4" stroke-width="1.300"/><rect x="6" y="1" width="13" height="9" fill="#8c8c8c" stroke="#e4e4e4" stroke-width="1.300"/><polygon points="24,13.500 24,16.500 21,16.500" fill="#c4c4c4"/></svg></div><div style="left:1768px;top:63px;width:152px;height:977px;background:#3a3a3a"></div><div style="left:1768px;top:63px;width:152px;height:12px;background:#3b3b3b;border-bottom:1px solid #2b2b2b"></div><svg style="left:1797px;top:66px" width="8" height="6"><polygon points="3.500,0 3.500,6 0,3" fill="#d8d8d8"/><polygon points="7.500,0 7.500,6 4,3" fill="#d8d8d8"/></svg><svg style="left:1909px;top:66px" width="8" height="6"><polygon points="3.500,0 3.500,6 0,3" fill="#d8d8d8"/><polygon points="7.500,0 7.500,6 4,3" fill="#d8d8d8"/></svg><div style="left:1770px;top:75px;width:37px;height:965px;background:#535353;border-left:1px solid #616161"></div><div class="grip" style="left:1778px;top:78px;width:20px"></div><div style="left:1770px;top:115px;width:37px;height:1px;background:#353535;box-shadow:0 1px 0 #626262"></div><div class="grip" style="left:1778px;top:119px;width:20px"></div><div style="left:1770px;top:156px;width:37px;height:1px;background:#353535;box-shadow:0 1px 0 #626262"></div><div style="left:1770px;top:209px;width:37px;height:4px;background:#3a3a3a"></div><svg style="left:1780px;top:88px" width="19" height="18" viewBox="0 0 19 18"><polygon points="6,0.500 11,3 11,9 6,11.500 1,9 1,3" fill="#a8a8a8" stroke="#e6e6e6" stroke-width="1.200"/><path d="M1 3l5 2.500 5 -2.500M6 5.500v6" stroke="#e6e6e6" stroke-width="1" fill="none"/><rect x="13" y="1" width="5" height="4" fill="#e0e0e0"/><rect x="13" y="6.500" width="5" height="4" fill="#e0e0e0"/><rect x="1" y="13.500" width="17" height="4" fill="#e0e0e0"/><polygon points="13,14.500 17,14.500 15,17" fill="#444"/></svg><svg style="left:1780px;top:127px" width="19" height="22" viewBox="0 0 19 22"><path d="M4.500 12l-3 -8 2.500 -1.500 3.500 9zM9 11.500l-1 -10.500h3l-0.500 10.500zM13 12l2.500 -8.500 2.500 1.500 -3 7.500z" fill="#cfcfcf"/><path d="M4.500 11.500h10.500v9h-10.500z" fill="#dcdcdc"/></svg><div style="left:1811px;top:75px;width:109px;height:965px;background:#535353;border-left:1px solid #626262"></div><div class="grip" style="left:1855px;top:78px;width:20px"></div><div style="left:1811px;top:143px;width:109px;height:1px;background:#333;box-shadow:0 1px 0 #646464"></div><svg style="left:1817px;top:86.8px" width="24" height="24" viewBox="-12 -12 24 24"><path d="M0 -6.500c6 0 10 2.500 10 6s-3 5.500 -6 5.500c-2 0 -1.500 -2.500 -3.500 -2.500s-2 2.500 -5 2.500c-3 0 -5.500 -2 -5.500 -5.500s4 -6 10 -6z" fill="#dedede"/><circle cx="-5.500" cy="-1" r="1.500" fill="#535353"/><circle cx="-1.500" cy="-3.500" r="1.500" fill="#535353"/><circle cx="3" cy="-3.500" r="1.500" fill="#535353"/><circle cx="6.500" cy="-0.500" r="1.500" fill="#535353"/></svg><span class="t" style="left:1847.6px;top:91.7px;font-size:10px;line-height:14px;color:#e9e9e9;font-weight:bold;letter-spacing:-0.45px;">Farbe</span><svg style="left:1817px;top:115.2px" width="24" height="24" viewBox="-12 -12 24 24"><rect x="-8" y="-8" width="16" height="16" fill="#6a6a6a" stroke="#dedede" stroke-width="1.200"/><path d="M-2.700 -8v16M2.700 -8v16M-8 -2.700h16M-8 2.700h16" stroke="#dedede" stroke-width="1.100"/><rect x="-7.400" y="-7.400" width="4.200" height="4.200" fill="#c9c9c9"/><rect x="3.200" y="3.200" width="4.200" height="4.200" fill="#3c3c3c"/></svg><span class="t" style="left:1847.6px;top:120.1px;font-size:10px;line-height:14px;color:#e9e9e9;font-weight:bold;letter-spacing:-0.24px;">Farbfelder</span><div class="grip" style="left:1855px;top:148px;width:20px"></div><div style="left:1811px;top:212px;width:109px;height:1px;background:#333;box-shadow:0 1px 0 #646464"></div><svg style="left:1817px;top:155.5px" width="24" height="24" viewBox="-12 -12 24 24"><circle r="7.500" fill="#535353" stroke="#dedede" stroke-width="1.500"/><path d="M5.300 -5.300A7.500 7.500 0 0 1 -5.300 5.300z" fill="#8c8c8c"/><path d="M5.300 -5.300A7.500 7.500 0 0 0 -5.300 5.300z" fill="#dedede"/></svg><span class="t" style="left:1847.6px;top:160.4px;font-size:10px;line-height:14px;color:#e9e9e9;font-weight:bold;letter-spacing:-0.08px;">Korrekturen</span><svg style="left:1817px;top:184px" width="24" height="24" viewBox="-12 -12 24 24"><defs><linearGradient id="sg" x1="0" y1="0" x2="1" y2="1"><stop offset="0" stop-color="#e6e6e6"/><stop offset="1" stop-color="#b4b4b4"/></linearGradient></defs><rect x="-6" y="-8.500" width="14" height="12" fill="url(#sg)"/><text x="-9.500" y="9" font-family="Liberation Serif" font-style="italic" font-size="14" fill="#f6f6f6" stroke="#f6f6f6" stroke-width="0.300">fx</text></svg><span class="t" style="left:1847.6px;top:188.9px;font-size:10px;line-height:14px;color:#e9e9e9;font-weight:bold;letter-spacing:0.02px;">Stile</span><div class="grip" style="left:1855px;top:217px;width:20px"></div><div style="left:1811px;top:309px;width:109px;height:1px;background:#333;box-shadow:0 1px 0 #646464"></div><div style="left:1815px;top:224.500px;width:100px;height:23px;background:#383838;border-radius:3px;border:1px solid #2f2f2f"></div><svg style="left:1817px;top:224.5px" width="24" height="24" viewBox="-12 -12 24 24"><polygon points="0,-8 8.500,-3.500 0,1 -8.500,-3.500" fill="#dedede"/><path d="M-8.500 1.500L0 6 8.500 1.500" fill="none" stroke="#dedede" stroke-width="2.200"/></svg><span class="t" style="left:1847.6px;top:229.4px;font-size:10px;line-height:14px;color:#e9e9e9;font-weight:bold;letter-spacing:-0.57px;">Ebenen</span><svg style="left:1817px;top:253px" width="24" height="24" viewBox="-12 -12 24 24"><circle cx="0" cy="-3" r="4.800" fill="#d0d0d0"/><circle cx="-3.500" cy="2.500" r="4.800" fill="#e4e4e4"/><circle cx="3.500" cy="2.500" r="4.800" fill="#bdbdbd"/><circle cx="0" cy="0.500" r="2.200" fill="#8a8a8a"/></svg><span class="t" style="left:1847.6px;top:257.9px;font-size:10px;line-height:14px;color:#e9e9e9;font-weight:bold;letter-spacing:-0.47px;">Kanäle</span><svg style="left:1817px;top:281px" width="24" height="24" viewBox="-12 -12 24 24"><path d="M-6.500 6.500c0 -9 2 -12 6.500 -12s6.500 3 6.500 12" fill="none" stroke="#dedede" stroke-width="1.300"/><path d="M-9 -6h18" stroke="#dedede" stroke-width="1"/><rect x="-10.500" y="-7.800" width="3.600" height="3.600" fill="#dedede"/><rect x="6.900" y="-7.800" width="3.600" height="3.600" fill="#dedede"/><rect x="-8.300" y="4.500" width="3.600" height="3.600" fill="#535353" stroke="#dedede"/><rect x="4.700" y="4.500" width="3.600" height="3.600" fill="#535353" stroke="#dedede"/><rect x="-1.500" y="-7.500" width="3" height="3" fill="#dedede"/></svg><span class="t" style="left:1847.6px;top:285.9px;font-size:10px;line-height:14px;color:#e9e9e9;font-weight:bold;letter-spacing:-0.35px;">Pfade</span><div class="grip" style="left:1855px;top:314px;width:20px"></div><div style="left:1811px;top:378px;width:109px;height:1px;background:#333;box-shadow:0 1px 0 #646464"></div><svg style="left:1817px;top:322px" width="24" height="24" viewBox="-12 -12 24 24"><polygon points="-7,-7.500 8,0 -7,7.500" fill="#cfcfcf"/></svg><span class="t" style="left:1847.6px;top:326.9px;font-size:10px;line-height:14px;color:#e9e9e9;font-weight:bold;letter-spacing:-0.03px;">Aktionen</span><svg style="left:1817px;top:350px" width="24" height="24" viewBox="-12 -12 24 24"><rect x="-7.500" y="-9" width="4" height="4" fill="none" stroke="#dedede" stroke-width="1.100"/><rect x="-7.500" y="-3" width="4" height="4" fill="none" stroke="#dedede" stroke-width="1.100"/><rect x="-8" y="3" width="5" height="5" fill="#dedede"/><path d="M1.500 5.500c4.500 -1 5.500 -7 1.500 -10.500" fill="none" stroke="#dedede" stroke-width="2"/><polygon points="-0.500,-6.500 5.500,-8 4,-2.500" fill="#dedede"/></svg><span class="t" style="left:1847.6px;top:354.9px;font-size:10px;line-height:14px;color:#e9e9e9;font-weight:bold;letter-spacing:-0.04px;">Protokoll</span><div class="grip" style="left:1855px;top:383px;width:20px"></div><div style="left:1811px;top:447px;width:109px;height:1px;background:#333;box-shadow:0 1px 0 #646464"></div><svg style="left:1817px;top:391px" width="24" height="24" viewBox="-12 -12 24 24"><text x="-9.500" y="6.500" font-family="Liberation Sans" font-size="17.500" fill="#dedede">A</text><path d="M5.500 -9.500v18" stroke="#dedede" stroke-width="1.200"/></svg><span class="t" style="left:1847.6px;top:395.9px;font-size:10px;line-height:14px;color:#e9e9e9;font-weight:bold;letter-spacing:-0.40px;">Zeichen</span><svg style="left:1817px;top:419px" width="24" height="24" viewBox="-12 -12 24 24"><g transform="translate(-3,0)"><path d="M1 -8h6M1.500 -8v16M5.500 -8v16" stroke="#dedede" stroke-width="1.600" fill="none"/><path d="M1.500 -8a4.500 4.500 0 0 0 0 9z" fill="#dedede"/></g></svg><span class="t" style="left:1847.6px;top:423.9px;font-size:10px;line-height:14px;color:#e9e9e9;font-weight:bold;letter-spacing:-0.46px;">Absatz</span><div style="left:1536px;top:212px;width:273px;height:799px;background:#2c2c2c"></div><div style="left:1537px;top:213px;width:271px;height:797px;background:#535353"></div><div style="left:1537px;top:213px;width:271px;height:19px;background:#3c3c3c;border-bottom:1px solid #2e2e2e"></div><div style="left:1537px;top:213px;width:47px;height:19px;background:#535353;border-top:1px solid #6a6a6a;border-right:1px solid #2e2e2e"></div><div style="left:1585px;top:214px;width:45px;height:17px;background:#444;border-right:1px solid #2e2e2e"></div><div style="left:1631px;top:214px;width:41px;height:17px;background:#444;border-right:1px solid #2e2e2e"></div><span class="t" style="left:1544.6px;top:216.1px;font-size:10px;line-height:14px;color:#f0f0f0;font-weight:bold;letter-spacing:-0.69px;">Ebenen</span><span class="t" style="left:1591.5px;top:216.1px;font-size:10px;line-height:14px;color:#9a9a9a;font-weight:bold;letter-spacing:-0.30px;">Kanäle</span><span class="t" style="left:1638.0px;top:216.1px;font-size:10px;line-height:14px;color:#9a9a9a;font-weight:bold;letter-spacing:-0.25px;">Pfade</span><svg style="left:1768px;top:218px" width="10" height="8"><polygon points="0,0 0,8 4.500,4" fill="#d8d8d8"/><polygon points="5,0 5,8 9.500,4" fill="#d8d8d8"/></svg><div style="left:1783px;top:216px;width:1px;height:13px;background:#2c2c2c;box-shadow:1px 0 0 #5c5c5c"></div><svg style="left:1788px;top:218px" width="17" height="9"><polygon points="0,1.500 6,1.500 3,5" fill="#e0e0e0"/><path d="M7 1h10M5 4h12M5 7h12" stroke="#e0e0e0" stroke-width="1.400"/></svg><div class="dd" style="left:1542px;top:236px;width:82px;height:18px"></div><svg style="left:1548px;top:239px" width="12" height="13" viewBox="0 0 12 13"><circle cx="7" cy="5" r="3.600" fill="none" stroke="#ececec" stroke-width="1.500"/><path d="M4.500 7.500L1 11.500" stroke="#ececec" stroke-width="2"/></svg><span class="t" style="left:1562.8px;top:238.5px;font-size:10px;line-height:14px;color:#e8e8e8;letter-spacing:0.24px;">Art</span><svg style="left:1614px;top:240px" width="6" height="10"><polygon points="0,4 6,4 3,0.500" fill="#e6e6e6"/><polygon points="0,6.500 6,6.500 3,10" fill="#e6e6e6"/></svg><svg style="left:1653px;top:238px" width="15" height="13" viewBox="0 0 15 13"><rect x="1" y="1" width="13" height="11" fill="#555" stroke="#e6e6e6" stroke-width="1.300"/><path d="M2.500 10.500l3.500 -4 2.500 2.500 1.500 -1.500 2.500 3z" fill="#e6e6e6"/><circle cx="10.500" cy="4.500" r="1.200" fill="#e6e6e6"/></svg><svg style="left:1677px;top:238px" width="14" height="14" viewBox="-7 -7 14 14"><circle r="5.600" fill="#e4e4e4"/><path d="M3.700 -3.700A5.200 5.200 0 0 1 -3.700 3.700z" fill="#5a5a5a"/></svg><span class="t" style="left:1702.500px;top:234px;font-family:'Liberation Serif',serif;font-weight:bold;font-size:17px;line-height:20px;color:#e8e8e8">T</span><svg style="left:1726px;top:238px" width="14" height="14" viewBox="0 0 14 14"><rect x="2.500" y="2.500" width="9" height="9" fill="none" stroke="#e4e4e4" stroke-width="1.300"/><g fill="#535353" stroke="#e4e4e4" stroke-width="1"><rect x="0.700" y="0.700" width="3" height="3"/><rect x="10.300" y="0.700" width="3" height="3"/><rect x="0.700" y="10.300" width="3" height="3"/><rect x="10.300" y="10.300" width="3" height="3"/></g></svg><svg style="left:1750px;top:237px" width="14" height="15" viewBox="0 0 14 15"><path d="M4.500 1h5.500l3 3v8.500h-8.500z" fill="#555" stroke="#e4e4e4" stroke-width="1.200"/><path d="M10 1v3h3" fill="none" stroke="#e4e4e4" stroke-width="1"/><rect x="0.500" y="8" width="7" height="6.500" fill="#e0e0e0"/></svg><div style="left:1795px;top:237px;width:8px;height:16px;background:linear-gradient(#9a9a9a 0,#8a8a8a 40%,#353535 45%,#3c3c3c 100%);border:1px solid #2e2e2e;border-radius:1px"></div><div style="left:1537px;top:258px;width:271px;height:1px;background:#3a3a3a;box-shadow:0 1px 0 #626262"></div><div class="dd" style="left:1542px;top:264px;width:146px;height:18px"></div><span class="t" style="left:1549.0px;top:266.0px;font-size:10px;line-height:14px;color:#e8e8e8;letter-spacing:-0.12px;">Normal</span><svg style="left:1678.500px;top:268px" width="6" height="10"><polygon points="0,4 6,4 3,0.500" fill="#e6e6e6"/><polygon points="0,6.500 6,6.500 3,10" fill="#e6e6e6"/></svg><span class="t" style="left:1696.3px;top:265.0px;font-size:10px;line-height:14px;color:#e8e8e8;">Deckkraft:</span><div class="fld" style="left:1747px;top:264px;width:38px;height:18px"></div><span class="t" style="left:1752.4px;top:266.0px;font-size:10px;line-height:14px;color:#f2f2f2;letter-spacing:-0.14px;">100%</span><div class="btn" style="left:1785px;top:264px;width:18px;height:18px"></div><svg style="left:1791px;top:271px" width="6" height="4"><polygon points="0,0 6,0 3,3.500" fill="#f0f0f0"/></svg><div style="left:1537px;top:286px;width:271px;height:1px;background:#3a3a3a;box-shadow:0 1px 0 #626262"></div><span class="t" style="left:1543.6px;top:295.1px;font-size:10px;line-height:14px;color:#e8e8e8;letter-spacing:-0.18px;">Fixieren:</span><svg style="left:1591px;top:296px" width="11" height="11" viewBox="0 0 11 11"><rect width="11" height="11" fill="#8a8a8a"/><path d="M0 0h3.700v3.700h-3.700zM7.300 0h3.700v3.700h-3.700zM3.700 3.700h3.600v3.600h-3.600zM0 7.300h3.700v3.700h-3.700zM7.300 7.300h3.700v3.700h-3.700z" fill="#6a6a6a"/><rect x="0.500" y="0.500" width="10" height="10" fill="none" stroke="#9a9a9a"/></svg><svg style="left:1610px;top:293px" width="18" height="15" viewBox="0 0 18 15"><path d="M16.500 1L7.500 10" stroke="#8f8f8f" stroke-width="2" stroke-linecap="round"/><path d="M1 13.500c3 0 3 -3.500 5.500 -4s3.500 1.500 2 3-5 2 -7.500 1z" fill="#8f8f8f"/></svg><svg style="left:1633px;top:294px" width="15" height="15" viewBox="-7.500 -7.500 15 15"><path d="M0 -5v10M-5 0h10" stroke="#ececec" stroke-width="1.300"/><path d="M0 -7.300l-2.500 3h5zM0 7.300l-2.500 -3h5zM-7.300 0l3 -2.500v5zM7.300 0l-3 -2.500v5z" fill="#ececec"/></svg><svg style="left:1657px;top:294px" width="12" height="14" viewBox="0 0 12 14"><path d="M3 6.500v-2.500a3 3 0 0 1 6 0v2.500" fill="none" stroke="#e4e4e4" stroke-width="1.700"/><rect x="0.800" y="6.300" width="10.400" height="7.200" fill="#e4e4e4"/><rect x="5.200" y="8.500" width="1.600" height="3" fill="#444"/></svg><span class="t" style="left:1710.4px;top:293.0px;font-size:10px;line-height:14px;color:#e8e8e8;letter-spacing:-0.31px;">Fläche:</span><div class="fld" style="left:1747px;top:292px;width:38px;height:18px"></div><span class="t" style="left:1752.4px;top:294.0px;font-size:10px;line-height:14px;color:#f2f2f2;letter-spacing:-0.14px;">100%</span><div class="btn" style="left:1785px;top:292px;width:18px;height:18px"></div><svg style="left:1791px;top:299px" width="6" height="4"><polygon points="0,0 6,0 3,3.500" fill="#f0f0f0"/></svg><div style="left:1537px;top:316px;width:271px;height:668px;background:#4a4a4a;border-top:1px solid #303030"></div><div style="left:1793px;top:316px;width:15px;height:668px;background:#444;border-left:1px solid #3a3a3a"></div><div style="left:1537px;top:317px;width:256px;height:39px;background:#535353;border-bottom:1px solid #383838"></div><div style="left:1568px;top:317px;width:225px;height:38px;background:#6b7f9d"></div><div style="left:1566px;top:317px;width:1px;height:38px;background:#3e3e3e"></div><svg style="left:1544px;top:330px" width="16" height="12" viewBox="-8 -6 16 12"><path d="M-6.500 0c3 -4.500 10 -4.500 13 0c-3 4.500 -10 4.500 -13 0z" fill="#dcdcdc"/><circle cx="0.300" cy="-0.300" r="2.700" fill="#4a4a4a"/><circle cx="0.800" cy="-0.800" r="1" fill="#e8e8e8"/></svg><div style="left:1569px;top:318px;width:29px;height:36px;border:1px solid #f4f4f4"></div><svg style="left:1571px;top:319px;overflow:hidden" width="26" height="35" viewBox="-1 -1 26 35"><rect width="22" height="32" fill="#fff"/><path d="M4 0h4v4h-4zM12 0h4v4h-4zM20 0h2v4h-2zM0 4h4v4h-4zM8 4h4v4h-4zM16 4h4v4h-4zM4 8h4v4h-4zM12 8h4v4h-4zM20 8h2v4h-2zM0 12h4v4h-4zM8 12h4v4h-4zM16 12h4v4h-4zM4 16h4v4h-4zM12 16h4v4h-4zM20 16h2v4h-2zM0 20h4v4h-4zM8 20h4v4h-4zM16 20h4v4h-4zM4 24h4v4h-4zM12 24h4v4h-4zM20 24h2v4h-2zM0 28h4v4h-4zM8 28h4v4h-4zM16 28h4v4h-4z" fill="#cfcfcf"/><rect x="10" y="20" width="16" height="15" fill="#65789a"/><rect x="14" y="23" width="8" height="7.500" fill="#5d6f8a" stroke="#e0e0e0" stroke-width="1"/><g fill="#65789a" stroke="#e0e0e0" stroke-width="0.900"><rect x="12.700" y="21.700" width="2.600" height="2.600"/><rect x="20.700" y="21.700" width="2.600" height="2.600"/><rect x="12.700" y="29.200" width="2.600" height="2.600"/><rect x="20.700" y="29.200" width="2.600" height="2.600"/></g><path d="M-0.500 -0.500h23v20h-13v13h-10z" fill="none" stroke="#1a1a1a" stroke-width="1"/></svg><span class="t" style="left:1605.3px;top:330.5px;font-size:10px;line-height:14px;color:#f2f2f2;letter-spacing:-0.16px;">Polygon 1 Kopie</span><div style="left:1537px;top:356px;width:256px;height:39px;background:#535353;border-bottom:1px solid #383838"></div><div style="left:1566px;top:356px;width:1px;height:38px;background:#3e3e3e"></div><svg style="left:1544px;top:369px" width="16" height="12" viewBox="-8 -6 16 12"><path d="M-6.500 0c3 -4.500 10 -4.500 13 0c-3 4.500 -10 4.500 -13 0z" fill="#dcdcdc"/><circle cx="0.300" cy="-0.300" r="2.700" fill="#4a4a4a"/><circle cx="0.800" cy="-0.800" r="1" fill="#e8e8e8"/></svg><svg style="left:1571px;top:358px;overflow:hidden" width="26" height="35" viewBox="-1 -1 26 35"><rect width="22" height="32" fill="#fff"/><path d="M4 0h4v4h-4zM12 0h4v4h-4zM20 0h2v4h-2zM0 4h4v4h-4zM8 4h4v4h-4zM16 4h4v4h-4zM4 8h4v4h-4zM12 8h4v4h-4zM20 8h2v4h-2zM0 12h4v4h-4zM8 12h4v4h-4zM16 12h4v4h-4zM4 16h4v4h-4zM12 16h4v4h-4zM20 16h2v4h-2zM0 20h4v4h-4zM8 20h4v4h-4zM16 20h4v4h-4zM4 24h4v4h-4zM12 24h4v4h-4zM20 24h2v4h-2zM0 28h4v4h-4zM8 28h4v4h-4zM16 28h4v4h-4z" fill="#cfcfcf"/><polygon points="11,5.500 21,10.500 21,22 11,27 1,22 1,10.500" fill="#4a9fe0"/><rect x="10" y="20" width="16" height="15" fill="#535353"/><rect x="14" y="23" width="8" height="7.500" fill="#4a4a4a" stroke="#e0e0e0" stroke-width="1"/><g fill="#535353" stroke="#e0e0e0" stroke-width="0.900"><rect x="12.700" y="21.700" width="2.600" height="2.600"/><rect x="20.700" y="21.700" width="2.600" height="2.600"/><rect x="12.700" y="29.200" width="2.600" height="2.600"/><rect x="20.700" y="29.200" width="2.600" height="2.600"/></g><path d="M-0.500 -0.500h23v20h-13v13h-10z" fill="none" stroke="#1a1a1a" stroke-width="1"/></svg><span class="t" style="left:1605.3px;top:369.5px;font-size:10px;line-height:14px;color:#f2f2f2;letter-spacing:-0.16px;">Polygon 1</span><div style="left:1537px;top:395px;width:256px;height:39px;background:#535353;border-bottom:1px solid #383838"></div><div style="left:1566px;top:395px;width:1px;height:38px;background:#3e3e3e"></div><svg style="left:1544px;top:408px" width="16" height="12" viewBox="-8 -6 16 12"><path d="M-6.500 0c3 -4.500 10 -4.500 13 0c-3 4.500 -10 4.500 -13 0z" fill="#dcdcdc"/><circle cx="0.300" cy="-0.300" r="2.700" fill="#4a4a4a"/><circle cx="0.800" cy="-0.800" r="1" fill="#e8e8e8"/></svg><svg style="left:1571px;top:397px;overflow:hidden" width="26" height="35" viewBox="-1 -1 26 35"><rect width="22" height="32" fill="#fff"/><path d="M-0.500 -0.500h23v33h-23z" fill="none" stroke="#1a1a1a" stroke-width="1"/></svg><span class="t" style="left:1605.3px;top:408.5px;font-size:10px;line-height:14px;color:#f2f2f2;letter-spacing:-0.14px;">Meine Ebene</span><div style="left:1537px;top:434px;width:256px;height:39px;background:#535353;border-bottom:1px solid #383838"></div><div style="left:1566px;top:434px;width:1px;height:38px;background:#3e3e3e"></div><svg style="left:1544px;top:447px" width="16" height="12" viewBox="-8 -6 16 12"><path d="M-6.500 0c3 -4.500 10 -4.500 13 0c-3 4.500 -10 4.500 -13 0z" fill="#dcdcdc"/><circle cx="0.300" cy="-0.300" r="2.700" fill="#4a4a4a"/><circle cx="0.800" cy="-0.800" r="1" fill="#e8e8e8"/></svg><svg style="left:1571px;top:436px;overflow:hidden" width="26" height="35" viewBox="-1 -1 26 35"><rect width="22" height="32" fill="#fff"/><rect x="19" y="14" width="2" height="2" fill="#e9b9a0"/><rect x="12" y="28" width="1" height="2" fill="#bbb"/><path d="M-0.500 -0.500h23v33h-23z" fill="none" stroke="#1a1a1a" stroke-width="1"/></svg><span class="t" style="left:1605.3px;top:447.5px;font-size:10px;line-height:14px;color:#f2f2f2;letter-spacing:-0.13px;">Vorlage</span><span class="t" style="left:1766px;top:404px;font-family:'Liberation Serif',serif;font-style:italic;font-size:15px;line-height:18px;color:#e8e8e8">fx</span><div style="left:1782.500px;top:397.500px;width:10px;height:35px;background:linear-gradient(#b8b8b8,#6e6e6e 60%,#5a5a5a);border-radius:1px"></div><svg style="left:1784px;top:412px" width="7" height="4"><polygon points="0,0 7,0 3.500,4" fill="#3a3a3a"/></svg><div style="left:1537px;top:984px;width:271px;height:18px;background:#535353;border-top:1px solid #6a6a6a;border-bottom:1px solid #2e2e2e"></div><div style="left:1537px;top:1002px;width:271px;height:8px;background:#535353"></div><div class="grip" style="left:1663px;top:1004.500px;width:20px"></div><svg style="left:1605px;top:989px" width="15" height="10" viewBox="0 0 15 10"><rect x="1.200" y="2.200" width="12.600" height="5.600" rx="2.800" fill="none" stroke="#c8c8c8" stroke-width="1.800"/></svg><span class="t" style="left:1632px;top:984px;font-family:'Liberation Serif',serif;font-style:italic;font-size:15px;line-height:18px;color:#e4e4e4">fx</span><svg style="left:1645px;top:997px" width="4" height="3"><polygon points="0,0 4,0 2,2.500" fill="#e0e0e0"/></svg><svg style="left:1660px;top:988px" width="14" height="11"><rect width="14" height="11" fill="#dcdcdc"/><circle cx="7" cy="5.500" r="2.400" fill="#4a4a4a"/></svg><svg style="left:1687px;top:987px" width="18" height="13" viewBox="0 0 18 13"><circle cx="6" cy="6.500" r="5.200" fill="#dcdcdc"/><path d="M9.700 2.800A5.200 5.200 0 0 1 2.300 10.200z" fill="#5a5a5a"/><polygon points="13,10 17,10 15,12.500" fill="#e0e0e0"/></svg><svg style="left:1713px;top:987px" width="15" height="12"><path d="M0 0h6l1.500 2h7v10h-14.500z" fill="#d8d8d8"/></svg><svg style="left:1740px;top:987px" width="13" height="13"><path d="M2.500 0h10.500v11h-6.500v-5h-4z" fill="#dcdcdc"/><path d="M0.500 6.500h5.500v5.500z" fill="#dcdcdc"/></svg><svg style="left:1768px;top:986px" width="12" height="14" viewBox="0 0 12 14"><path d="M0.500 3h11M4 2.500v-1.500h4v1.500" stroke="#dcdcdc" stroke-width="1.500" fill="none"/><path d="M1.500 4.500h9l-0.800 9h-7.400z" fill="#dcdcdc"/><path d="M4 6v6M6 6v6M8 6v6" stroke="#4a4a4a" stroke-width="0.900"/></svg><svg style="left:1796px;top:990px" width="11" height="11"><path d="M10 1v9h-9z" fill="none"/><g fill="#2f2f2f"><rect x="9" y="1" width="1" height="1"/><rect x="7" y="3" width="1" height="1"/><rect x="9" y="3" width="1" height="1"/><rect x="5" y="5" width="1" height="1"/><rect x="7" y="5" width="1" height="1"/><rect x="9" y="5" width="1" height="1"/><rect x="3" y="7" width="1" height="1"/><rect x="5" y="7" width="1" height="1"/><rect x="7" y="7" width="1" height="1"/><rect x="9" y="7" width="1" height="1"/><rect x="1" y="9" width="1" height="1"/><rect x="3" y="9" width="1" height="1"/><rect x="5" y="9" width="1" height="1"/><rect x="7" y="9" width="1" height="1"/><rect x="9" y="9" width="1" height="1"/></g></svg><div class="red" style="left:-1px;top:87.200px;width:43.300px;height:33.200px;border-width:5.500px;border-left-width:6.600px;border-radius:2px"></div><div class="red" style="left:-1px;top:534.400px;width:41.100px;height:33.100px;border-width:5.800px;border-radius:2px"></div><div class="red" style="left:140.500px;top:24.500px;width:226px;height:39.700px;border-width:5.300px"></div><div class="red" style="left:1532px;top:312px;width:265.500px;height:84.500px"></div>
</body>
</html>
